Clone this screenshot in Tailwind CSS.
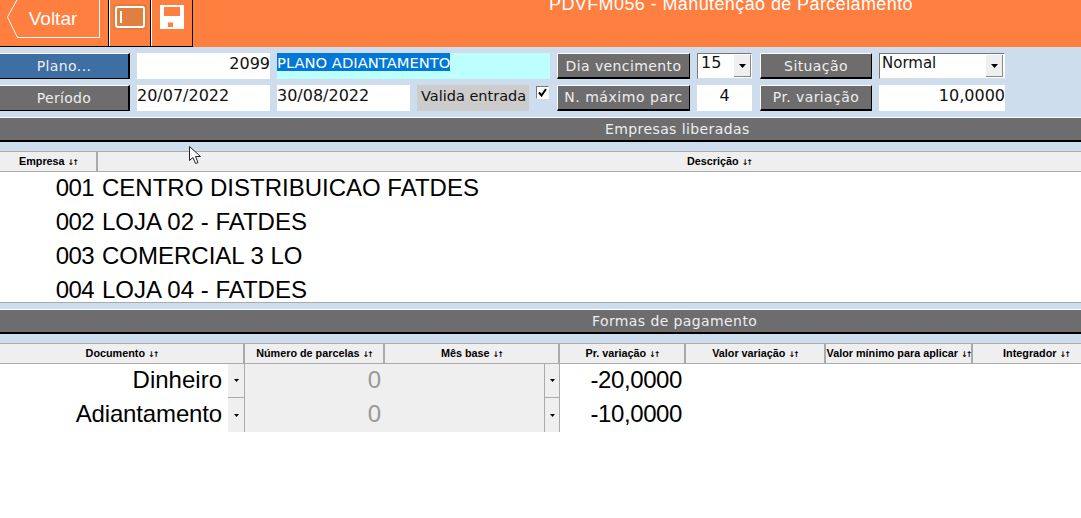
<!DOCTYPE html>
<html lang="pt">
<head>
  <meta charset="UTF-8">
  <title>PDVFM056 - Manutenção de Parcelamento</title>
  <script src="https://cdn.jsdelivr.net/npm/@tailwindcss/browser@4"></script>
</head>
<body class="relative h-[518px] w-[1081px] overflow-hidden bg-white font-['DejaVu_Sans',sans-serif] text-[14px] text-[#111]">

  <!-- barra superior -->
  <header class="flex h-[47px] items-start overflow-hidden bg-[#FF7F40] text-white">
    <div class="flex h-[47px] w-[193px] items-stretch border-b-[1px] border-black">
      <a class="relative ml-[7px] mt-[-1px] flex h-[39px] w-[93px] items-center justify-center">
        <svg class="absolute inset-0" width="93" height="39" viewBox="0 0 93 39" fill="none" stroke="#fff"><path d="M92.5 0V38.5H10.5L0.5 18L10.5 0"/></svg>
        <span class="relative pr-[1px] pt-[1px] font-['Liberation_Sans',sans-serif] text-[19px]">Voltar</span>
      </a>
      <div class="ml-[8px] flex w-[42px] items-start justify-center border-l-[1px] border-black pt-[4px] shadow-[inset_1px_0_0_#fff]">
        <div class="flex h-[26px] w-[34px] items-center bg-[#DF8040] p-[2px]">
          <div class="flex h-full w-full items-center rounded-[3px] border-[2px] border-white pl-[3px]"><div class="h-[12px] w-[2px] bg-white"></div></div>
        </div>
      </div>
      <div class="flex w-[43px] items-start justify-center border-x-[1px] border-black pt-[5px] shadow-[inset_1px_0_0_#fff]">
        <svg width="24" height="24" viewBox="0 0 24 24"><path fill="#fff" d="M0 0H24V24H0Z"/><path fill="#FF7F40" d="M4 2H20V11H4ZM8 17.500H13V22H8Z"/></svg>
      </div>
    </div>
    <div class="ml-[356px] mt-[-6px] whitespace-nowrap font-['Liberation_Sans',sans-serif] text-[18px] leading-[20px] tracking-[0.4px]">PDVFM056 - Manutenção de Parcelamento</div>
  </header>

  <!-- formulário -->
  <section class="flex h-[70px] flex-col gap-[6px] bg-[#CEDDEE] pt-[6px]">
    <div class="flex h-[26px] gap-[7px]">
      <button class="w-[130px] border-y-[1px] border-r-[2px] border-t-white border-r-black border-b-black bg-[#3D6FA3] text-[#eee] tracking-[0.4px]">Plano...</button>
      <div class="w-[133px] bg-white text-right text-[16px] leading-[22px]">2099</div>
      <div class="w-[273px] bg-[#BDFFFF] leading-[20px]"><span class="inline-block h-[18px] bg-[#0078D7] text-[14.75px] leading-[20px] text-white">PLANO ADIANTAMENTO</span></div>
      <button class="w-[133px] border-[1px] border-b-[2px] border-t-white border-l-white border-r-black border-b-black bg-[#6D6D6D] pt-[2px] text-[#eee] tracking-[0.4px]">Dia vencimento</button>
      <div class="flex w-[55px] border-[1px] border-t-[#777] border-l-[#777] border-r-white border-b-[#ddd] bg-white text-[16px] leading-[18px]">
        <span class="flex-1 pl-[3px]">15</span>
        <span class="mt-[1px] flex h-[22px] w-[17px] items-center justify-center border-r-[1px] border-b-[1px] border-[#888] bg-[#EFEFEF]"><svg width="7" height="4" viewBox="0 0 7 4"><path d="M0 0H7L3.500 4Z"/></svg></span>
      </div>
      <button class="ml-[1px] w-[112px] border-[1px] border-b-[2px] border-t-white border-l-white border-r-black border-b-black bg-[#6D6D6D] pt-[2px] text-[#eee] tracking-[0.4px]">Situação</button>
      <div class="flex w-[126px] border-[1px] border-t-[#777] border-l-[#777] border-r-white border-b-[#ddd] bg-white text-[15px] leading-[18px]">
        <span class="flex-1 pl-[2px]">Normal</span>
        <span class="mt-[1px] mr-[1px] flex h-[22px] w-[17px] items-center justify-center border-r-[1px] border-b-[1px] border-[#888] bg-[#EFEFEF]"><svg width="7" height="4" viewBox="0 0 7 4"><path d="M0 0H7L3.500 4Z"/></svg></span>
      </div>
    </div>
    <div class="flex h-[26px] gap-[7px]">
      <button class="w-[130px] border-y-[1px] border-r-[2px] border-t-white border-r-black border-b-black bg-[#6D6D6D] text-[#eee] tracking-[0.3px]">Período</button>
      <div class="w-[133px] bg-white text-[16px] leading-[22px]">20/07/2022</div>
      <div class="w-[133px] bg-white text-[16px] leading-[22px]">30/08/2022</div>
      <div class="w-[112px] bg-[#CCCCCC] pl-[4px] text-[14.5px] leading-[22px]">Valida entrada</div>
      <div class="w-[14px] pt-[1px]">
        <div class="flex h-[13px] w-[13px] items-center justify-center border-[1px] border-t-[#777] border-l-[#777] border-r-white border-b-white bg-white">
          <svg width="9" height="9" viewBox="0 0 9 9"><path d="M1 4.500L3.500 7.500L8 1" fill="none" stroke="#000" stroke-width="2"/></svg>
        </div>
      </div>
      <button class="w-[133px] border-[1px] border-b-[2px] border-t-white border-l-white border-r-black border-b-black bg-[#6D6D6D] text-[#eee] tracking-[0.55px] whitespace-nowrap">N. máximo parc</button>
      <div class="w-[55px] bg-white text-center text-[16px] leading-[22px]">4</div>
      <button class="ml-[1px] w-[112px] border-[1px] border-b-[2px] border-t-white border-l-white border-r-black border-b-black bg-[#6D6D6D] text-[#eee] tracking-[0.4px]">Pr. variação</button>
      <div class="w-[126px] bg-white text-right text-[16px] leading-[22px]">10,0000</div>
    </div>
  </section>

  <!-- empresas -->
  <div class="h-[25px] border-t-[1px] border-b-[2px] border-t-white border-b-black bg-[#6D6D6D] pl-[605px] leading-[23px] tracking-[0.4px] text-[#eee]">Empresas liberadas</div>
  <div class="h-[9px] bg-[#CEDDEE]"></div>
  <div class="grid h-[21px] grid-cols-[98px_1fr] border-y-[1px] border-[#aaa] bg-[#EFEFEF] font-['Liberation_Sans',sans-serif] text-[10.8px] font-bold leading-[18px] text-black">
    <div class="border-r-[2px] border-[#aaa] text-center">Empresa <span class="font-['DejaVu_Sans',sans-serif] text-[8px] tracking-[-2px]">↓↑</span></div>
    <div class="pl-[589px]">Descrição <span class="font-['DejaVu_Sans',sans-serif] text-[8px] tracking-[-2px]">↓↑</span></div>
  </div>
  <div class="flex h-[130px] flex-col gap-[2px] font-['Liberation_Sans',sans-serif] text-[24px] leading-[32px] text-black">
    <div class="flex gap-[8px]"><span class="w-[94px] text-right tracking-[-0.6px]">001</span><span>CENTRO DISTRIBUICAO FATDES</span></div>
    <div class="flex gap-[8px]"><span class="w-[94px] text-right tracking-[-0.6px]">002</span><span>LOJA 02 - FATDES</span></div>
    <div class="flex gap-[8px]"><span class="w-[94px] text-right tracking-[-0.6px]">003</span><span>COMERCIAL 3 LO</span></div>
    <div class="flex gap-[8px]"><span class="w-[94px] text-right tracking-[-0.6px]">004</span><span>LOJA 04 - FATDES</span></div>
  </div>

  <!-- formas de pagamento -->
  <div class="h-[7px] border-t-[1px] border-[#aaa] bg-[#CEDDEE]"></div>
  <div class="h-[25px] border-t-[1px] border-b-[2px] border-t-white border-b-black bg-[#6D6D6D] pl-[592px] leading-[23px] tracking-[0.4px] text-[#eee]">Formas de pagamento</div>
  <div class="h-[9px] bg-[#CEDDEE]"></div>
  <div class="grid h-[21px] grid-cols-[245px_140px_175px_126px_140px_147px_1fr] border-y-[1px] border-[#aaa] bg-[#EFEFEF] text-center font-['Liberation_Sans',sans-serif] text-[10.8px] font-bold leading-[18px] text-black whitespace-nowrap">
    <div class="border-r-[2px] border-[#aaa]">Documento <span class="font-['DejaVu_Sans',sans-serif] text-[8px] tracking-[-2px]">↓↑</span></div>
    <div class="border-r-[2px] border-[#aaa]">Número de parcelas <span class="font-['DejaVu_Sans',sans-serif] text-[8px] tracking-[-2px]">↓↑</span></div>
    <div class="border-r-[2px] border-[#aaa]">Mês base <span class="font-['DejaVu_Sans',sans-serif] text-[8px] tracking-[-2px]">↓↑</span></div>
    <div class="border-r-[2px] border-[#aaa]">Pr. variação <span class="font-['DejaVu_Sans',sans-serif] text-[8px] tracking-[-2px]">↓↑</span></div>
    <div class="border-r-[2px] border-[#aaa]">Valor variação <span class="font-['DejaVu_Sans',sans-serif] text-[8px] tracking-[-2px]">↓↑</span></div>
    <div class="border-r-[2px] border-[#aaa]">Valor mínimo para aplicar <span class="font-['DejaVu_Sans',sans-serif] text-[8px] tracking-[-2px]">↓↑</span></div>
    <div class="pl-[18px]">Integrador <span class="font-['DejaVu_Sans',sans-serif] text-[8px] tracking-[-2px]">↓↑</span></div>
  </div>
  <div class="grid grid-cols-[245px_140px_175px_126px_1fr] font-['Liberation_Sans',sans-serif] text-[24px] leading-[32px] text-black">
    <div class="flex h-[34px] justify-end"><span class="pr-[6px]">Dinheiro</span><span class="flex w-[17px] items-center justify-center border-r-[1px] border-b-[1px] border-[#aaa] bg-[#EFEFEF]"><svg width="5" height="3" viewBox="0 0 5 3"><path d="M0 0H5L2.500 3Z"/></svg></span></div>
    <div class="h-[34px] bg-[#EFEFEF] pr-[4px] text-right text-[#999]">0</div>
    <div class="flex h-[34px] justify-end bg-[#EFEFEF]"><span class="flex w-[16px] items-center justify-center border-x-[1px] border-b-[1px] border-[#aaa]"><svg width="5" height="3" viewBox="0 0 5 3"><path d="M0 0H5L2.500 3Z"/></svg></span></div>
    <div class="h-[34px] pr-[4px] text-right tracking-[-0.4px]">-20,0000</div>
    <div></div>
    <div class="flex h-[34px] justify-end"><span class="pr-[6px] tracking-[-0.15px]">Adiantamento</span><span class="flex w-[17px] items-center justify-center border-r-[1px] border-[#aaa] bg-[#EFEFEF]"><svg width="5" height="3" viewBox="0 0 5 3"><path d="M0 0H5L2.500 3Z"/></svg></span></div>
    <div class="h-[34px] bg-[#EFEFEF] pr-[4px] text-right text-[#999]">0</div>
    <div class="flex h-[34px] justify-end bg-[#EFEFEF]"><span class="flex w-[16px] items-center justify-center border-x-[1px] border-[#aaa]"><svg width="5" height="3" viewBox="0 0 5 3"><path d="M0 0H5L2.500 3Z"/></svg></span></div>
    <div class="h-[34px] pr-[4px] text-right tracking-[-0.4px]">-10,0000</div>
    <div></div>
  </div>

  <!-- cursor -->
  <svg class="absolute left-[189px] top-[146px]" width="14" height="19" viewBox="0 0 14 19"><path d="M0.500 0.500V14.500L4 11.500L6.500 17.500L9 16.500L6.500 10.500H11.500Z" fill="#fff" stroke="#222"/></svg>
</body>
</html>
